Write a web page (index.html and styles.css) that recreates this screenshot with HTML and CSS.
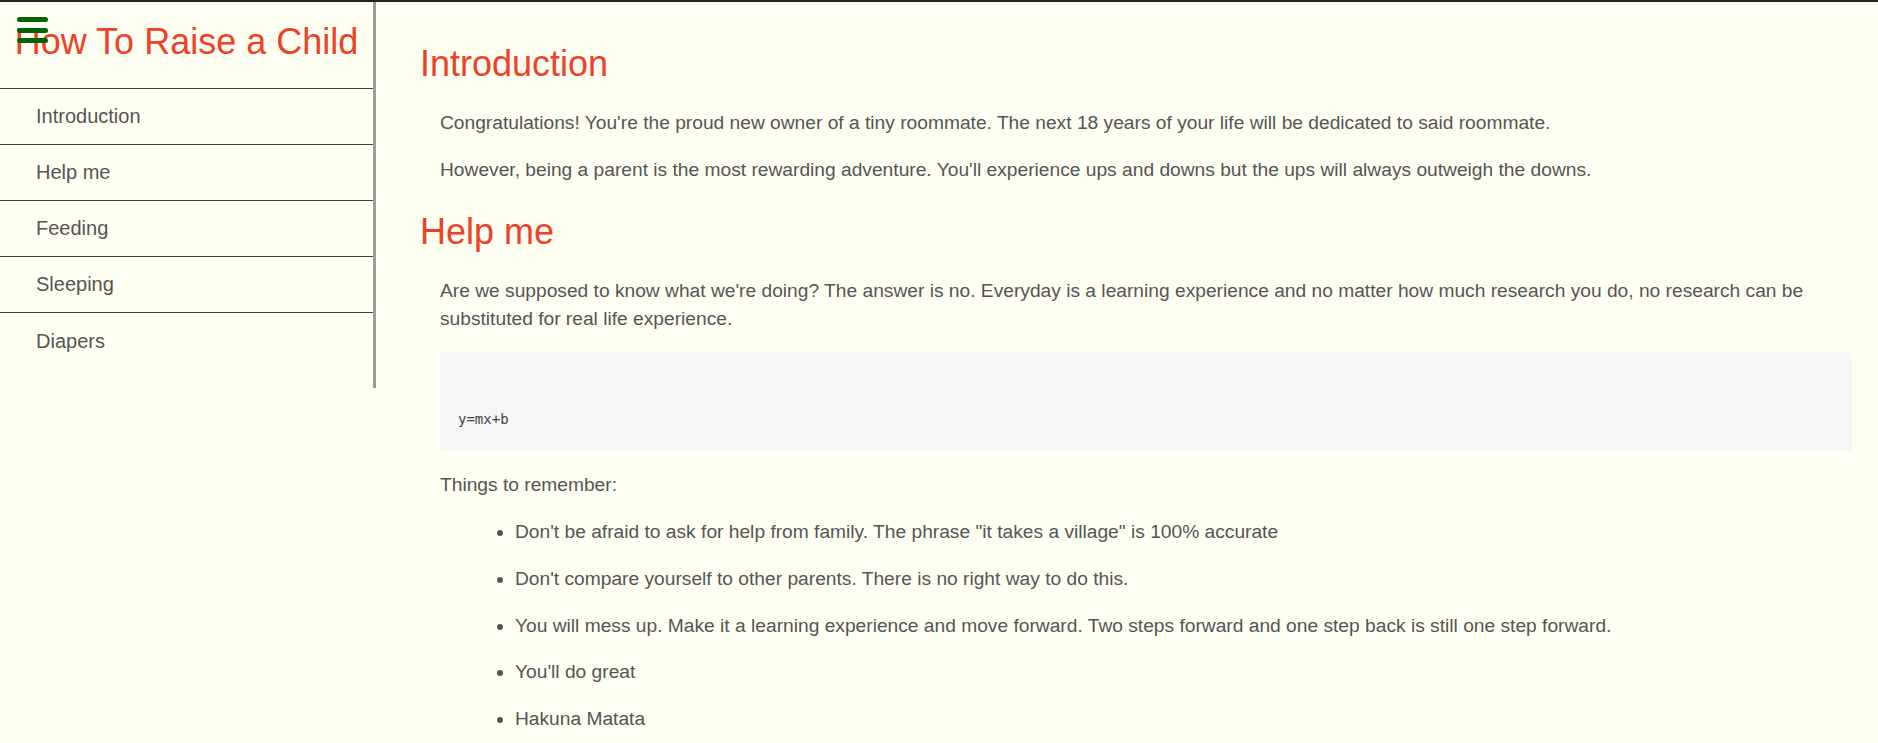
FILE: index.html
```html
<!DOCTYPE html>
<html lang="en">
<head>
<meta charset="utf-8">
<title>How To Raise a Child</title>
<link rel="stylesheet" href="styles.css">
</head>
<body>
<div class="page">
  <nav class="sidebar" id="navbar">
    <header class="side-header">
      <h1 class="side-title">How To Raise a Child</h1>
    </header>
    <ul class="nav-list">
      <li class="nav-item"><a class="nav-link" href="#Introduction">Introduction</a></li>
      <li class="nav-item"><a class="nav-link" href="#Help_me">Help me</a></li>
      <li class="nav-item"><a class="nav-link" href="#Feeding">Feeding</a></li>
      <li class="nav-item"><a class="nav-link" href="#Sleeping">Sleeping</a></li>
      <li class="nav-item"><a class="nav-link" href="#Diapers">Diapers</a></li>
    </ul>
  </nav>
  <button class="menu-btn" aria-label="Menu">
    <span class="bar"></span><span class="bar"></span><span class="bar"></span>
  </button>
  <main class="main" id="main-doc">
    <section class="main-section" id="Introduction">
      <h2 class="sec-title">Introduction</h2>
      <p class="para">Congratulations! You're the proud new owner of a tiny roommate. The next 18 years of your life will be dedicated to said roommate.</p>
      <p class="para">However, being a parent is the most rewarding adventure. You'll experience ups and downs but the ups will always outweigh the downs.</p>
    </section>
    <section class="main-section" id="Help_me">
      <h2 class="sec-title">Help me</h2>
      <p class="para">Are we supposed to know what we're doing? The answer is no. Everyday is a learning experience and no matter how much research you do, no research can be substituted for real life experience.</p>
      <pre class="code-box"><code>y=mx+b</code></pre>
      <p class="para">Things to remember:</p>
      <ul class="tips">
        <li class="tip">Don't be afraid to ask for help from family. The phrase "it takes a village" is 100% accurate</li>
        <li class="tip">Don't compare yourself to other parents. There is no right way to do this.</li>
        <li class="tip">You will mess up. Make it a learning experience and move forward. Two steps forward and one step back is still one step forward.</li>
        <li class="tip">You'll do great</li>
        <li class="tip">Hakuna Matata</li>
      </ul>
    </section>
  </main>
</div>
</body>
</html>
```
FILE: styles.css
```css
* { box-sizing: border-box; }

html, body {
  margin: 0;
  padding: 0;
  background: #fffff2;
}

body {
  font-family: "Liberation Sans", Arial, sans-serif;
  color: #555;
  border-top: 2px solid #222;
  overflow: hidden;
  height: 743px;
}

.page {
  display: flex;
  align-items: flex-start;
  position: relative;
}

.sidebar {
  flex: 0 0 376px;
  width: 376px;
  border-right: 3px solid #9a9e97;
  padding-bottom: 19px;
}

.side-header {
  height: 87px;
  border-bottom: 1px solid #444;
  display: flex;
  justify-content: center;
}

.side-title {
  margin: 0;
  padding-top: 16px;
  font-size: 36px;
  font-weight: normal;
  line-height: 48px;
  color: #ee4128;
  white-space: nowrap;
}

.nav-list {
  list-style: none;
  margin: 0;
  padding: 0;
}

.nav-item {
  height: 56px;
  border-bottom: 1px solid #444;
  display: flex;
  align-items: center;
}

.nav-item:last-child {
  border-bottom: none;
}

.nav-link {
  padding-left: 36px;
  font-size: 20px;
  color: #555;
  text-decoration: none;
}

.menu-btn {
  position: absolute;
  left: 17px;
  top: 15px;
  width: 31px;
  height: 26px;
  padding: 0;
  border: none;
  background: transparent;
  display: flex;
  flex-direction: column;
  justify-content: space-between;
}

.bar {
  display: block;
  width: 31px;
  height: 5px;
  border-radius: 3px;
  background: #006400;
}

.main {
  flex: 1;
  min-width: 0;
  padding: 15px 26px 0 44px;
}

.sec-title {
  margin: 20px 0 18px;
  font-size: 36px;
  font-weight: normal;
  line-height: 54px;
  color: #ee4128;
}

.para {
  margin: 18px 0 18px 20px;
  font-size: 19.2px;
  line-height: 28.8px;
}

.code-box {
  margin: 18px 0 20px 20px;
  padding: 56px 18px 20px;
  background: #f6f6f6;
  border-radius: 5px;
  box-shadow: 0 0 1px rgba(0,0,0,0.05);
  font-family: "Liberation Mono", "DejaVu Sans Mono", monospace;
  font-size: 14px;
  line-height: 22px;
  color: #444;
}

.tips {
  margin: 18px 0 18px 20px;
  padding-left: 75px;
  font-size: 19.2px;
  line-height: 28.8px;
}

.tip {
  margin: 18px 0;
}
```
